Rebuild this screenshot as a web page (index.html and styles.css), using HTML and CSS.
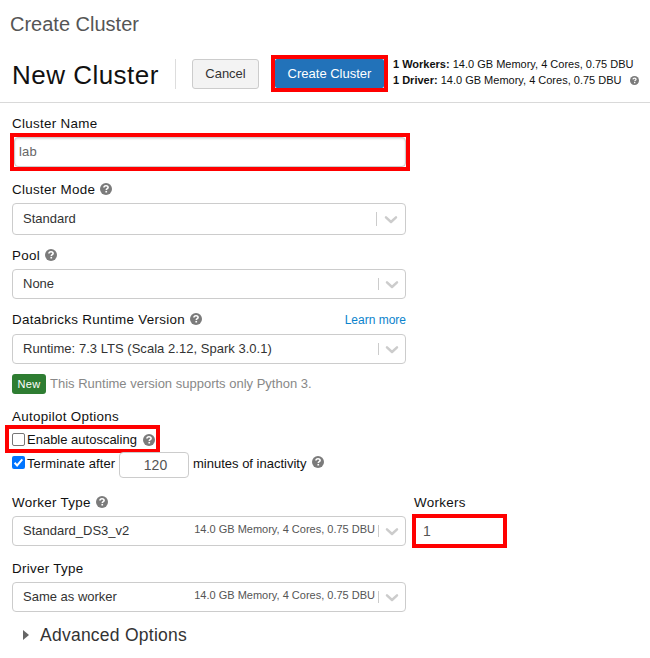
FILE: index.html
```html
<!DOCTYPE html>
<html lang="en">
<head>
<meta charset="utf-8">
<title>Create Cluster</title>
<link rel="stylesheet" href="styles.css">
</head>
<body>
<svg width="0" height="0" class="defs">
  <symbol id="help" viewBox="0 0 12 12"><circle cx="6" cy="6" r="6" fill="#7b7b7b"/><path d="M3.9 4.5C4 3.3 4.9 2.7 6 2.7c1.2 0 2.1.7 2.1 1.7 0 1.3-1.8 1.3-1.8 2.6" fill="none" stroke="#fff" stroke-width="1.6"/><path d="M5.4 7.9h1.7v1.6H5.4z" fill="#fff"/></symbol>
  <symbol id="chevron" viewBox="0 0 14 10"><path d="M2 2.4l5 4.6 5-4.6" fill="none" stroke="#ccc" stroke-width="2.5" stroke-linecap="round" stroke-linejoin="round"/></symbol>
</svg>
<div class="page-title"><span class="t-page">Create Cluster</span></div>
<header class="header">
  <h1 class="t-new">New Cluster</h1>
  <div class="divider"></div>
  <button class="btn cancel">Cancel</button>
  <div class="mark mark-create"><button class="btn create">Create Cluster</button></div>
  <div class="summary">
    <div><b>1 Workers:</b> 14.0 GB Memory, 4 Cores, 0.75 DBU</div>
    <div><b>1 Driver:</b> 14.0 GB Memory, 4 Cores, 0.75 DBU <svg class="help small"><use href="#help"/></svg></div>
  </div>
</header>
<main class="form">
  <div class="label l-name"><span>Cluster Name</span></div>
  <div class="mark mark-name"><div class="input">lab</div></div>

  <div class="label l-mode"><span>Cluster Mode</span><svg class="help"><use href="#help"/></svg></div>
  <div class="select tall"><span>Standard</span><i class="sep"></i><svg class="chev"><use href="#chevron"/></svg></div>

  <div class="label l-pool"><span>Pool</span><svg class="help"><use href="#help"/></svg></div>
  <div class="select"><span>None</span><i class="sep"></i><svg class="chev"><use href="#chevron"/></svg></div>

  <div class="label l-runtime"><span>Databricks Runtime Version</span><svg class="help"><use href="#help"/></svg><a class="learn">Learn more</a></div>
  <div class="select"><span class="t-runtime">Runtime: 7.3 LTS (Scala 2.12, Spark 3.0.1)</span><i class="sep"></i><svg class="chev"><use href="#chevron"/></svg></div>
  <div class="note"><span class="badge">New</span><span class="t-note">This Runtime version supports only Python 3.</span></div>

  <div class="label l-auto"><span>Autopilot Options</span></div>
  <div class="mark mark-auto"><span class="check"></span><span class="t-enable">Enable autoscaling</span><svg class="help"><use href="#help"/></svg></div>
  <div class="terminate">
    <span class="check on"><svg viewBox="0 0 13 13"><path d="M2.6 6.8l2.5 2.6 5.2-6" fill="none" stroke="#fff" stroke-width="2"/></svg></span>
    <span class="t-term">Terminate after</span>
    <div class="minutes">120</div>
    <span class="t-minutes">minutes of inactivity</span>
    <svg class="help"><use href="#help"/></svg>
  </div>

  <div class="worker-row">
    <div class="worker">
      <div class="label l-worker"><span>Worker Type</span><svg class="help"><use href="#help"/></svg></div>
      <div class="select"><span>Standard_DS3_v2</span><small>14.0 GB Memory, 4 Cores, 0.75 DBU</small><i class="sep"></i><svg class="chev low"><use href="#chevron"/></svg></div>
    </div>
    <div class="count">
      <div class="label l-workers"><span>Workers</span></div>
      <div class="mark mark-count">1</div>
    </div>
  </div>
  <div class="label l-driver"><span>Driver Type</span></div>
  <div class="select"><span>Same as worker</span><small>14.0 GB Memory, 4 Cores, 0.75 DBU</small><i class="sep"></i><svg class="chev low"><use href="#chevron"/></svg></div>
  <div class="advanced"><i class="caret"></i><span class="t-adv">Advanced Options</span></div>
</main>
</body>
</html>
```
FILE: styles.css
```css
* { box-sizing: border-box; }
body { margin: 0; width: 650px; height: 658px; overflow: hidden; background: #fff; color: #111; font: 13px/16px "Liberation Sans", Arial, sans-serif; }
.defs { position: absolute; }
svg { display: block; }
span, small, a { white-space: nowrap; }
.page-title { height: 48px; padding: 0 10px; font-size: 20px; line-height: 48px; color: #555; }
.header { display: flex; align-items: flex-start; height: 55px; padding: 7px 0 0 12px; border-bottom: 1px solid #d9d9d9; }
h1 { margin: 4px 0 0; width: 163px; font-size: 26px; line-height: 32px; font-weight: 400; letter-spacing: .48px; white-space: nowrap; }
.divider { width: 1px; height: 30px; margin: 4px 16px 0 0; background: #ddd; }
.btn { font: inherit; padding: 0; border: 1px solid #ccc; border-radius: 3px; white-space: nowrap; }
.cancel { width: 67px; height: 30px; margin: 4px 12px 0 0; background: #f3f3f3; color: #333; }
.mark { border: 4px solid #f00; }
.mark-create { width: 117px; height: 37px; background: #fff; }
.create { display: block; width: 109px; height: 29px; border: 0; border-radius: 2px; background: #2272b9; color: #fff; }
.summary { margin: 1px 0 0 5px; font-size: 11px; line-height: 16px; white-space: nowrap; }
.help { flex: none; width: 12px; height: 12px; }
.help.small { display: inline-block; width: 9px; height: 9px; margin-left: 5px; vertical-align: -1px; }
.form { padding-left: 12px; }
.label { display: flex; align-items: center; width: 394px; font-size: 13.4px; letter-spacing: .3px; }
.label .help { margin: -1px 0 0 5px; }
.l-name { height: 30px; padding-top: 11px; }
.mark-name { width: 400px; height: 38px; margin-left: -2px; }
.input { height: 30px; padding-left: 4px; border: 1px solid #ccc; border-radius: 4px; box-shadow: inset 0 1px 2px #ddd; color: #666; line-height: 28px; letter-spacing: .2px; }
.l-mode { height: 32px; padding-top: 5px; }
.select { display: flex; align-items: center; width: 394px; height: 30px; padding: 0 6px 0 10px; border: 1px solid #ccc; border-radius: 4px; color: #333; }
.t-runtime { letter-spacing: .03px; }
.select.tall { height: 32px; padding-right: 7px; }
.select small { margin-left: auto; font-size: 11px; color: #555; margin-top: -4px; }
.sep { width: 1px; height: 12px; margin-left: auto; background: #ccc; }
.select small + .sep { margin-left: 3px; }
.tall .sep { height: 14px; margin-right: 1px; }
.chev { width: 14px; height: 10px; margin-left: 6px; margin-top: 1px; }
.low { margin-top: 2px; }
.l-pool { height: 34px; padding-top: 7px; }
.l-runtime { height: 35px; padding-top: 6px; }
.learn { margin-left: auto; font-size: 12px; letter-spacing: 0; color: #0c83cc; }
.note { display: flex; align-items: center; height: 40px; }
.badge { width: 34px; height: 20px; border-radius: 3px; background: #2e7d32; color: #fff; font-size: 11px; line-height: 20px; text-align: center; letter-spacing: .3px; }
.t-note { margin-left: 4px; color: #888; }
.l-auto { height: 21px; padding-top: 4px; }
.mark-auto { display: flex; align-items: center; width: 155px; height: 28px; margin-left: -7px; padding: 1px 0 0 3px; }
.mark-auto .help { margin-left: 6px; }
.check { flex: none; width: 13px; height: 13px; border: 1px solid #767676; border-radius: 2px; background: #fff; }
.check.on { border: 0; background: #0075ff; }
.t-enable, .t-term { margin-left: 2px; }
.terminate { display: flex; height: 39px; margin-top: -1px; }
.terminate .check { margin-top: 4px; }
.t-term { width: 92px; margin-top: 4px; letter-spacing: .1px; }
.minutes { width: 70px; height: 26px; border: 1px solid #ccc; border-radius: 4px; font-size: 14px; line-height: 25px; padding-left: 3px; text-align: center; color: #555; }
.t-minutes { margin: 4px 0 0 4px; }
.terminate .help { margin: 4px 0 0 6px; }
.worker-row { display: flex; height: 57px; }
.worker { width: 400px; }
.l-worker { height: 25px; padding-bottom: 2px; }
.count .label { height: 23px; width: 95px; padding-left: 2px; }
.mark-count { width: 95px; height: 34px; padding-left: 7px; font-size: 14px; line-height: 27px; color: #555; }
.l-driver { height: 34px; padding-top: 7px; }
.advanced { display: flex; align-items: center; height: 46px; padding-left: 11px; font-size: 17.5px; letter-spacing: .25px; color: #333; }
.caret { width: 0; height: 0; border: 5px solid transparent; border-left: 6px solid #666; border-right: 0; margin-right: 11px; }
```
